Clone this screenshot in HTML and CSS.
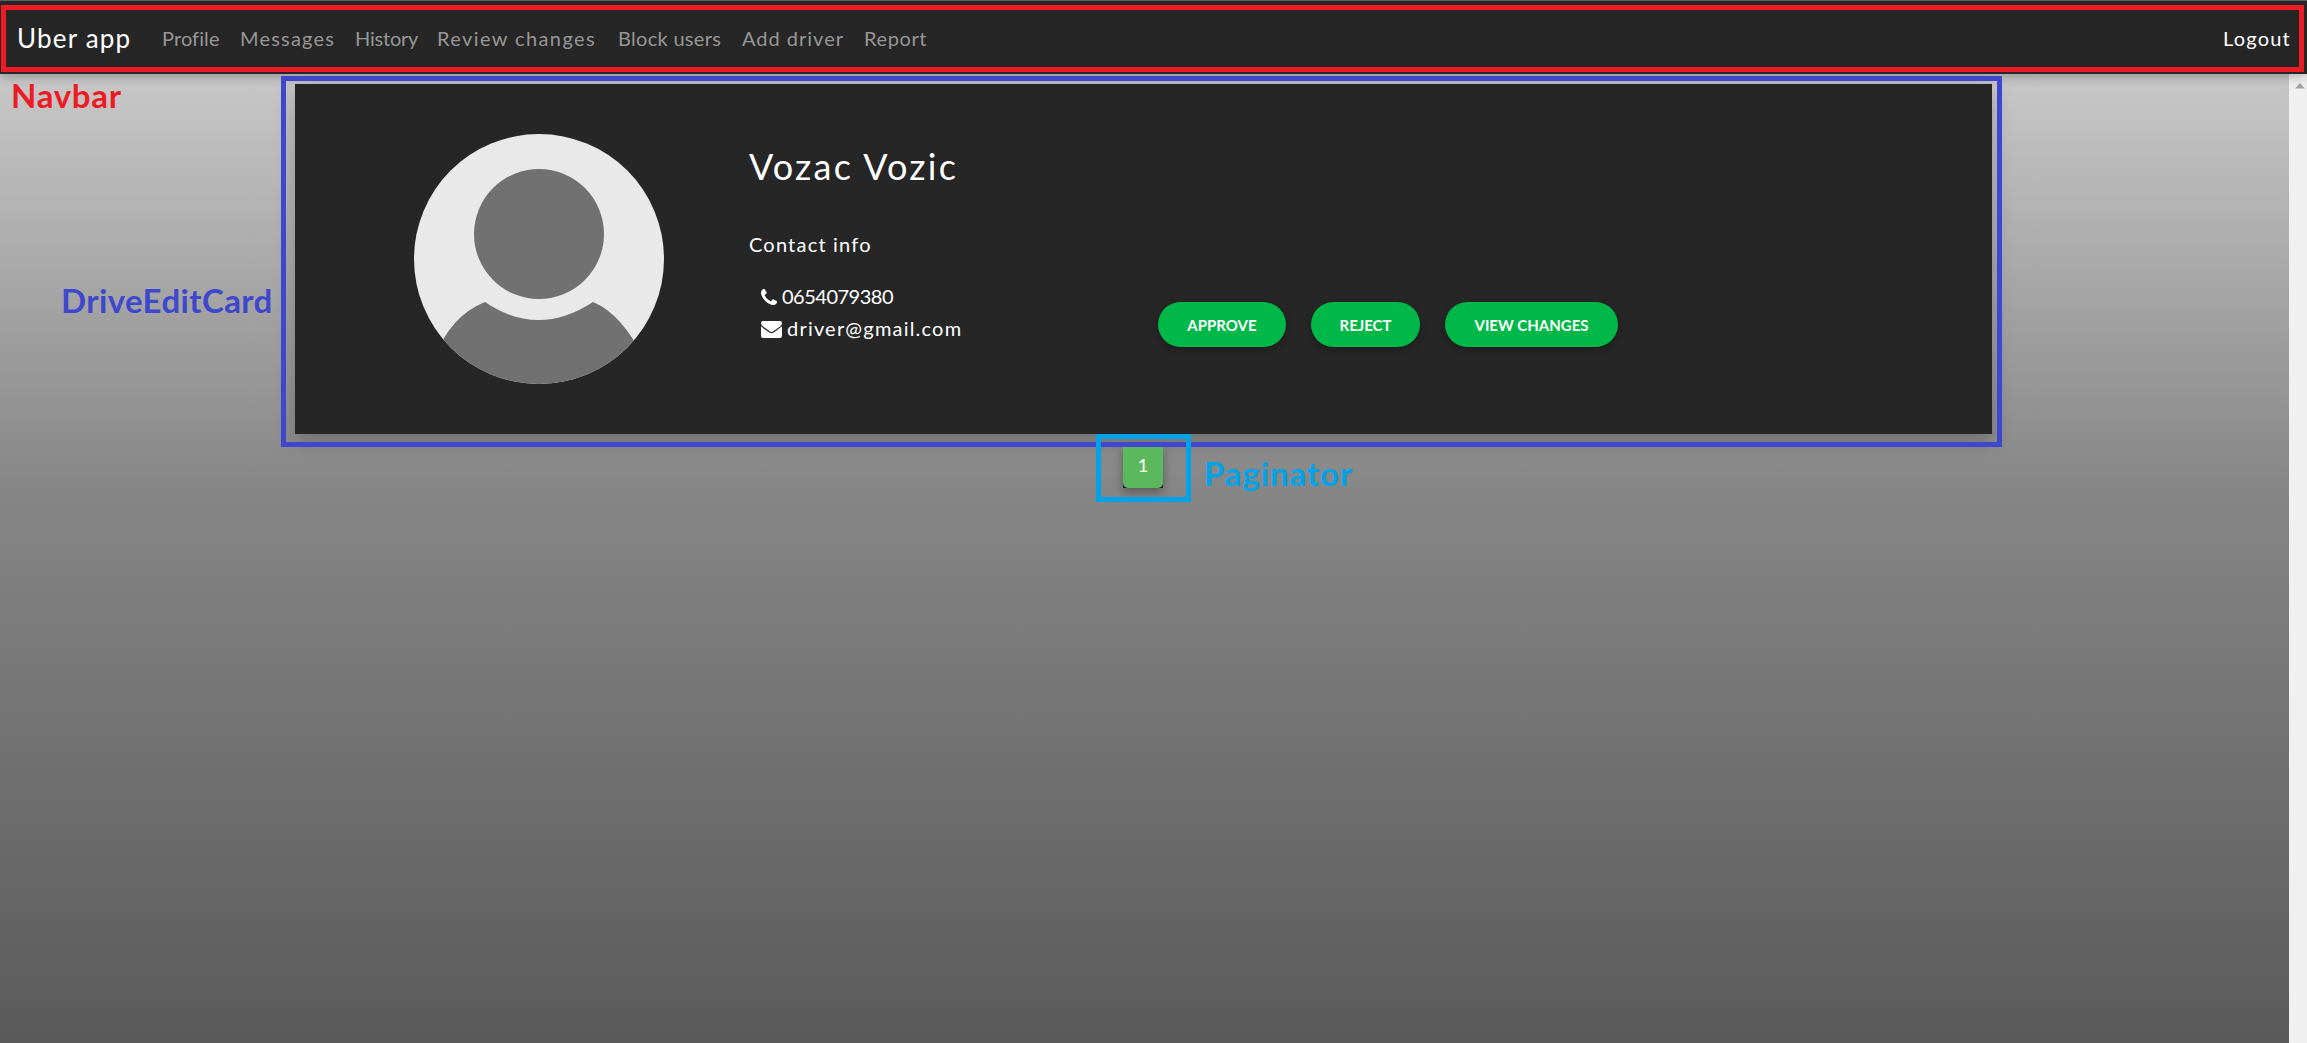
FILE: index.html
```html
<!DOCTYPE html>
<html lang="en">
<head>
<meta charset="utf-8">
<title>Uber app</title>
<link rel="stylesheet" href="styles.css">
</head>
<body>
<header class="navbar">
  <a class="brand">Uber app</a>
  <nav class="links">
    <a class="l-profile">Profile</a><a class="l-messages">Messages</a><a class="l-history">History</a><a class="l-review">Review changes</a><a class="l-block">Block users</a><a class="l-add">Add driver</a><a class="l-report">Report</a>
  </nav>
  <a class="logout">Logout</a>
</header>
<div class="page">
  <main class="content">
    <section class="card">
      <svg class="avatar" viewBox="0 0 250 250">
        <defs><clipPath id="round"><circle cx="125" cy="125" r="125"/></clipPath></defs>
        <g clip-path="url(#round)">
          <rect width="250" height="250" fill="#e9e9e9"/>
          <circle cx="125" cy="100" r="65" fill="#717171"/>
          <path d="M20 225Q36 182 71 168Q124 204 179 168Q208 180 230 225V250H20Z" fill="#717171"/>
        </g>
      </svg>
      <div class="info">
        <h1>Vozac Vozic</h1>
        <h2>Contact info</h2>
        <p class="phone"><svg width="16" height="16" viewBox="0 0 1408 1408"><path fill="#fff" d="M1408 1112q0 27-10 70.500t-21 68.500q-21 50-122 106-94 51-186 51-27 0-53-3.500t-57.500-12.500-47-14.500-55.500-20.500-49-18q-98-35-175-83-127-79-264-216t-216-264q-48-77-83-175-3-9-18-49t-20.500-55.500-14.500-47-12.500-57.500-3.500-53q0-92 51-186 56-101 106-122 25-11 68.500-21t70.500-10q14 0 21 3 18 6 53 76 11 19 30 54t35 63.500 31 53.500q3 4 17.500 25t21.500 35.500 7 28.500q0 20-28.500 50t-62 55-62 53-28.500 46q0 9 5 22.500t8.500 20.500 14 24 11.500 19q76 137 174 235t235 174q2 1 19 11.500t24 14 20.500 8.500 22.500 5q18 0 46-28.500t53-62 55-62 50-28.500q14 0 28.500 7t35.500 21.500 25 17.500q25 15 53.500 31t63.500 35 54 30q70 35 76 53 3 7 3 21z"/></svg><span>0654079380</span></p>
        <p class="mail"><svg width="21" height="17" viewBox="0 0 21 17"><path fill="#fff" d="M0 5.300Q.6 6 6.500 10.200Q9 12.300 10.500 12.300Q12 12.300 14.500 10.200Q20.400 6 21 5.300V15Q21 17 19 17H2Q0 17 0 15Z"/><path fill="#fff" d="M2 0H19Q21 0 21 2Q21 4 18.700 5.700L13 9.700Q11.300 11 10.500 11Q9.700 11 8 9.700L2.300 5.700Q0 4 0 2Q0 0 2 0Z"/></svg><span>driver@gmail.com</span></p>
      </div>
      <div class="actions">
        <button class="approve">APPROVE</button>
        <button class="reject">REJECT</button>
        <button class="view">VIEW CHANGES</button>
      </div>
    </section>
    <div class="pagination"><div class="pages"><a>1</a></div></div>
  </main>
  <aside class="scrollbar"><svg width="10" height="6" viewBox="0 0 10 6"><path d="M5 0L10 5.500H0Z" fill="#a3a3a3"/></svg></aside>
</div>
<div class="frame frame-nav"></div>
<div class="frame frame-card"></div>
<div class="frame frame-page"></div>
<span class="note note-nav">Navbar</span>
<span class="note note-card">DriveEditCard</span>
<span class="note note-page">Paginator</span>
</body>
</html>
```
FILE: styles.css
```css
* { box-sizing: border-box; }
body {
  margin: 0;
  height: 1043px;
  position: relative;
  overflow: hidden;
  display: flex;
  flex-direction: column;
  font-family: "Century Gothic", Lato, sans-serif;
  color: #fff;
}
.navbar {
  height: 74px;
  flex: none;
  display: flex;
  align-items: center;
  padding: 0 16px 0 17px;
  background: #262626;
  border-top: 1px solid #5c5d60;
  box-shadow: 0 3px 10px rgba(0, 0, 0, .25);
  z-index: 1;
}
.brand { width: 145px; font-size: 26px; letter-spacing: 1.2px; white-space: nowrap; }
.links {
  flex: 1;
  display: grid;
  grid-template-columns: 78px 115px 82px 181px 124px 122px 80px;
  font-size: 20px;
  color: #979797;
  white-space: nowrap;
}
.l-profile { letter-spacing: .1px; }
.l-messages { letter-spacing: 1.2px; }
.l-history { letter-spacing: -.2px; }
.l-review { letter-spacing: 1.4px; }
.l-block { letter-spacing: .3px; }
.l-add { letter-spacing: 1px; }
.l-report { letter-spacing: .6px; }
.logout { font-size: 20px; letter-spacing: 1.2px; }
.page { flex: 1; display: flex; }
.content {
  flex: 1;
  padding: 10px 297px 0 295px;
  background: linear-gradient(#c8c8c8, #878787 42%, #5a5a5a);
}
.card {
  height: 350px;
  display: flex;
  padding: 50px 0 0 119px;
  background: #262626;
  box-shadow: 0 8px 20px rgba(0, 0, 0, .22);
}
.avatar { width: 250px; height: 250px; flex: none; }
.info { width: 409px; margin-left: 85px; padding-top: 8px; }
.info h1 { margin: 0; font-weight: 400; font-size: 36px; line-height: 48px; letter-spacing: 2.2px; }
.info h2 { margin: 42px 0 0; font-weight: 400; font-size: 20px; line-height: 24px; letter-spacing: 1.2px; }
.info p { margin: 0 0 0 12px; display: flex; align-items: center; height: 32px; font-size: 20px; }
.info span { margin-top: -2px; }
.info .phone { gap: 5px; margin-top: 25px; }
.mail { gap: 5px; letter-spacing: 1.2px; }
.phone { letter-spacing: -.5px; }
.actions { display: flex; gap: 25px; padding-top: 168px; }
.actions button {
  height: 45px;
  padding: 0;
  border: 0;
  border-radius: 23px;
  background: #00b848;
  color: #fff;
  font: bold 15px "Century Gothic", Lato, sans-serif;
  box-shadow: 0 3px 6px rgba(0, 0, 0, .25);
}
.approve { width: 128px; }
.reject { width: 109px; }
.view { width: 173px; }
.pagination { display: flex; justify-content: center; padding: 13px 1px 0 0; }
.pages { background: #1c1c1c; box-shadow: 0 4px 10px rgba(0, 0, 0, .35); }
.pages a {
  display: block;
  width: 40px;
  height: 41px;
  background: #5cb85c;
  border-radius: 0 0 5px 5px;
  text-align: center;
  font-size: 18px;
  line-height: 36px;
}
.scrollbar { width: 18px; background: #f0f0f0; padding: 9px 0 0 6px; line-height: 0; }
.frame { position: absolute; z-index: 2; border: 5px solid; }
.frame-nav { left: 1px; top: 5px; width: 2303px; height: 67px; border-color: #ed1c24; }
.frame-card { left: 281px; top: 76px; width: 1721px; height: 371px; border-color: #3f48cc; }
.frame-page { left: 1096px; top: 434px; width: 95px; height: 68px; border-color: #00a2e8; }
.note { position: absolute; z-index: 2; font: bold 33px/40px Lato, sans-serif; white-space: nowrap; }
.note-nav { left: 11px; top: 75px; color: #ed1c24; letter-spacing: .7px; }
.note-card { left: 61px; top: 280px; color: #3f48cc; letter-spacing: .4px; }
.note-page { left: 1204px; top: 453px; color: #00a2e8; letter-spacing: .9px; }
```
